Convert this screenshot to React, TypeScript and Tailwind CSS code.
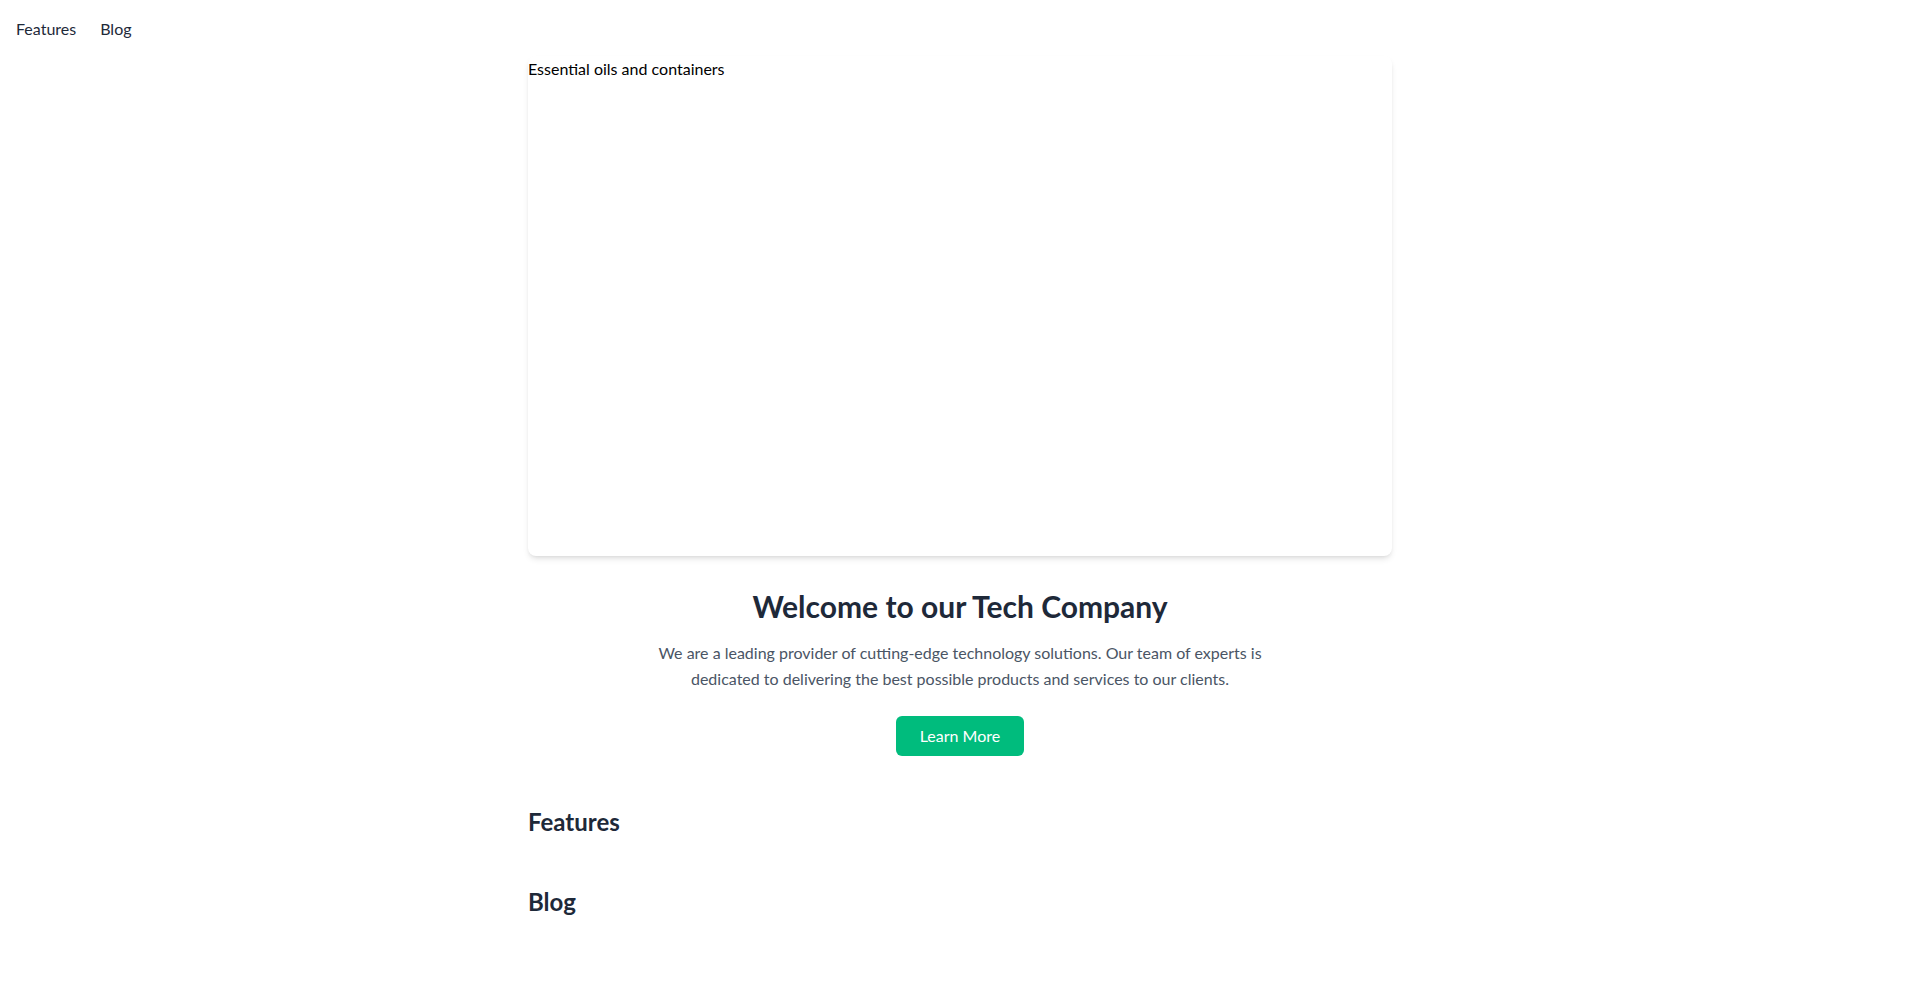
import React from "react";

const font = { fontFamily: 'Lato, "Noto Sans", sans-serif' };

function Nav() {
    return (
        <nav className="flex h-14 items-center gap-6 px-4 pt-px text-base text-gray-800">
            <a href="#features">Features</a>
            <a href="#blog">Blog</a>
        </nav>
    );
}

export default function App() {
    return (
        <div className="min-h-screen bg-white font-['Lato','Noto_Sans',sans-serif]" style={font}>
            <Nav />
            <main className="mx-auto max-w-4xl px-4">
                <div className="h-[500px] w-full overflow-hidden rounded-lg bg-white shadow-md">
                    <div className="pt-px text-base leading-6 text-black">Essential oils and containers</div>
                </div>

                <section className="mt-8 flex flex-col items-center text-center">
                    <h1 className="text-3xl font-bold text-gray-800">Welcome to our Tech Company</h1>
                    <p className="mt-4 max-w-2xl text-base leading-relaxed text-gray-600">
                        We are a leading provider of cutting-edge technology solutions. Our team of experts is
                        dedicated to delivering the best possible products and services to our clients.
                    </p>
                    <button className="mt-6 rounded-md bg-emerald-500 px-6 py-2 text-base text-white">
                        Learn More
                    </button>
                </section>

                <section id="features" className="mt-[50px]">
                    <h2 className="text-2xl font-bold text-gray-800">Features</h2>
                </section>

                <section id="blog" className="mt-12">
                    <h2 className="text-2xl font-bold text-gray-800">Blog</h2>
                </section>
            </main>
        </div>
    );
}
